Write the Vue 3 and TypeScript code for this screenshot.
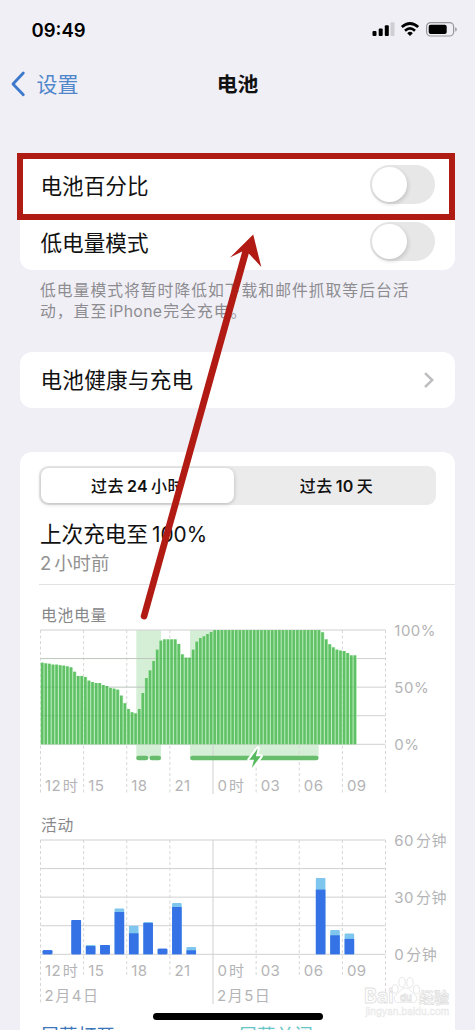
<script setup lang="ts">
interface Activity {
  hour: number
  on: number
  off: number
}

const left = 20.5
const hourWidth = 14.375
const chartTop = 10
const chartHeight = 114.3

const levels: number[] = [
  71.4, 70.8, 70.5, 69.7, 69.7, 69.1, 68.8, 68.2, 67.3, 63.5, 59.8, 59.8, 58.9, 55.7, 54.5, 53.6,
  53.6, 51.9, 51, 49.3, 48.7, 47.8, 42.6, 35.9, 30.9, 28, 27.1, 30.9, 44.9, 58, 64.7, 72.9,
  82.8, 90.7, 91.8, 91.8, 91.8, 91.8, 87.8, 78.7, 75.8, 75.8, 82.8, 89.8, 93, 94.5, 96.5, 98.3,
  ...Array<number>(30).fill(100),
  98, 91.8, 87.5, 84.8, 82.8, 82, 81.6, 79.9, 77.8, 77.8,
]

const activity: Activity[] = [
  { hour: 0, on: 4, off: 0 },
  { hour: 2, on: 34.3, off: 0 },
  { hour: 3, on: 8.2, off: 1 },
  { hour: 4, on: 9.2, off: 0 },
  { hour: 5, on: 42.3, off: 3.5 },
  { hour: 6, on: 21, off: 7.6 },
  { hour: 7, on: 31.3, off: 1 },
  { hour: 8, on: 5.5, off: 0 },
  { hour: 9, on: 47.3, off: 4 },
  { hour: 10, on: 4, off: 3.4 },
  { hour: 19, on: 64.7, off: 11.6 },
  { hour: 20, on: 19, off: 5.3 },
  { hour: 21, on: 15.4, off: 5.3 },
]

const verticals = Array.from({ length: 9 }, (_, i) => left + i * hourWidth * 3)
const horizontals = Array.from({ length: 5 }, (_, i) => chartTop + (i * chartHeight) / 4)
const hourLabels: string[] = ['12', '15', '18', '21', '0', '03', '06', '09']
const base = chartTop + chartHeight
</script>

<template>
  <div class="phone">
    <header class="status">
      <span class="clock">09:49</span>
      <svg class="status-icons" width="90" height="20" viewBox="0 0 90 20">
        <rect x="2.5" y="11" width="4" height="5" rx="1" />
        <rect x="8.7" y="8.5" width="4" height="7.5" rx="1" />
        <rect x="14.8" y="5.3" width="4" height="10.7" rx="1" />
        <rect x="20.5" y="2.3" width="4" height="13.7" rx="1" fill="#cfced3" />
        <g fill="none" stroke="#000" stroke-width="2.7">
          <path d="M31.8 7.1Q40 -.1 48.2 7.1" />
          <path d="M35 10.7Q40 6.2 45 10.7" />
        </g>
        <path d="M37.2 13.2Q40 10.5 42.8 13.2L40 16Z" />
        <rect x="56.6" y="2.6" width="27" height="13.4" rx="4" fill="none" stroke="#98979c" stroke-width="1.2" />
        <rect x="58.7" y="4.7" width="18" height="9.2" rx="2" />
        <path d="M85 7.2Q87 7.6 87 9.4T85 11.5Z" fill="#aaa9ae" />
      </svg>
    </header>

    <nav class="nav">
      <a class="back">
        <svg width="16" height="26" viewBox="0 0 16 26"><path d="M13.3 2 3 13l10.3 10.8" /></svg>
        <span>设置</span>
      </a>
      <h1>电池</h1>
    </nav>

    <main>
      <section class="card toggles">
        <div class="row"><span>电池百分比</span><i class="switch"></i></div>
        <div class="row"><span>低电量模式</span><i class="switch"></i></div>
        <div class="highlight"></div>
      </section>
      <p class="note">低电量模式将暂时降低如下载和邮件抓取等后台活<br />动，直至<span class="latin">iPhone</span>完全充电。</p>

      <section class="card health">
        <div class="row">
          <span>电池健康与充电</span>
          <svg width="12" height="18" viewBox="0 0 12 18"><path d="m2 2.2 7.2 6.9L2 16" /></svg>
        </div>
      </section>

      <section class="card usage">
        <div class="segments">
          <button class="active">过去<b>24</b>小时</button>
          <button>过去<b>10</b>天</button>
        </div>
        <h2>上次充电至<span>100%</span></h2>
        <p class="ago"><span>2</span>小时前</p>
        <hr />

        <h3>电池电量</h3>
        <svg class="chart" width="435" height="191" viewBox="0 0 435 191">
          <rect x="116.3" y="10" width="24.7" height="128" class="charging" />
          <rect x="170" y="10" width="128.6" height="128" class="charging" />
          <line v-for="y in horizontals" :key="y" :x1="left" x2="365.5" :y1="y" :y2="y" class="grid" />
          <line
            v-for="(x, i) in verticals" :key="x" :x1="x" :x2="x" :y1="chartTop" y2="174"
            :class="['grid', { dashed: i !== 4 }]"
          />
          <g v-for="(level, i) in levels" :key="i">
            <rect
              :x="left + i * hourWidth / 4" :y="base - level * chartHeight / 100"
              :width="hourWidth / 4" :height="level * chartHeight / 100" class="level-back"
            />
            <rect
              :x="left + 0.45 + i * hourWidth / 4" :y="base - level * chartHeight / 100"
              width="2.5" :height="level * chartHeight / 100" class="level"
            />
          </g>
          <line v-for="y in horizontals.slice(1, 4)" :key="'o' + y" :x1="left" x2="335" :y1="y" :y2="y" class="tint" />
          <g class="charge-line">
            <path d="M118.5 138H126" /><path d="M131.8 138H138.8" /><path d="M172.4 138H296.3" />
          </g>
          <path d="M237.8 128.3 229.3 139.8H234L231.8 147.9 240.8 136.3H235.9Z" class="bolt" />
          <text
            v-for="(label, i) in hourLabels" :key="label" :x="25 + i * hourWidth * 3" y="170.5"
          >{{ label }}<tspan v-if="i % 4 === 0" dx="1.5">时</tspan></text>
          <text x="374.3" y="15.8">100%</text>
          <text x="374.3" y="72.8">50%</text>
          <text x="374.3" y="129.8">0%</text>
        </svg>

        <h3 class="second">活动</h3>
        <svg class="chart" width="435" height="180" viewBox="0 0 435 180">
          <line v-for="y in horizontals" :key="y" :x1="left" x2="365.5" :y1="y" :y2="y" class="grid" />
          <line
            v-for="(x, i) in verticals" :key="x" :x1="x" :x2="x" :y1="chartTop" :y2="i % 4 === 0 ? 174 : 147"
            :class="['grid', { dashed: i !== 4 }]"
          />
          <g v-for="bar in activity" :key="bar.hour">
            <rect
              :x="left + 2.2 + bar.hour * hourWidth" :y="base - bar.on - bar.off" width="9.6"
              :height="bar.on + bar.off" rx="1" :fill="bar.off ? '#7fc6ee' : '#3472e6'"
            />
            <rect
              :x="left + 2.2 + bar.hour * hourWidth" :y="base - bar.on" width="9.6" :height="bar.on"
              :rx="bar.off ? 0 : 1" fill="#3472e6"
            />
          </g>
          <text
            v-for="(label, i) in hourLabels" :key="label" :x="25 + i * hourWidth * 3" y="145.5"
          >{{ label }}<tspan v-if="i % 4 === 0" dx="1.5">时</tspan></text>
          <text x="24.5" y="171">2<tspan dx="1">月</tspan><tspan dx="1">4</tspan><tspan dx="1">日</tspan></text>
          <text x="197" y="171">2<tspan dx="1">月</tspan><tspan dx="1">5</tspan><tspan dx="1">日</tspan></text>
          <text x="374.3" y="15.8">60<tspan dx="2">分钟</tspan></text>
          <text x="374.3" y="72.8">30<tspan dx="2">分钟</tspan></text>
          <text x="374.3" y="129.8">0<tspan dx="2">分钟</tspan></text>
        </svg>
        <div class="totals"><span>屏幕打开</span><span>屏幕关闭</span></div>
      </section>
    </main>

    <svg class="watermark" width="92" height="44" viewBox="0 0 92 44">
      <text x="3" y="28" class="brand">Bai</text>
      <g class="paw">
        <ellipse cx="34" cy="14" rx="3" ry="4.2" /><ellipse cx="41" cy="7.3" rx="3.2" ry="4.8" />
        <ellipse cx="49" cy="7.6" rx="3.2" ry="4.8" /><ellipse cx="55.5" cy="14.5" rx="3" ry="4.2" />
        <path d="M44.5 13c5 0 6 4.5 9.3 6.7 4 3 1.7 8.3-3 7.8q-6-1-12.5 0c-5 .5-7-4.8-3-7.8C38.8 17.5 40 13 44.5 13Z" />
      </g>
      <text x="39" y="26" class="du">du</text>
      <text x="58" y="28" class="cn">经验</text>
      <text x="4.5" y="40" class="site">jingyan.baidu.com</text>
    </svg>
    <div class="home"></div>
    <svg class="arrow" width="475" height="1030" viewBox="0 0 475 1030">
      <path d="M253.2 234.5 230 257.5 242.2 251.5 140.9 615.2A3.3 3.3 0 0 0 147.2 617.2L248.8 253.5 261.3 267Z" />
    </svg>
  </div>
</template>

<style>
body {
  margin: 0;
  background: #f0eff5;
}
</style>

<style scoped>
.phone {
  position: relative;
  width: 475px;
  height: 1030px;
  overflow: hidden;
  background: #f0eff5;
  color: #111;
  font-family: Inter, "Noto Sans CJK SC", sans-serif;
}
.status {
  display: flex;
  justify-content: space-between;
  box-sizing: border-box;
  height: 60px;
  padding: 20px 15px 0 31.5px;
}
.clock {
  font-size: 18.5px;
  font-weight: 600;
  line-height: 20px;
  color: #000;
}
.nav {
  display: grid;
  grid-template-columns: 1fr auto 1fr;
  align-items: center;
  height: 48px;
}
.back {
  display: flex;
  align-items: center;
  gap: 10.5px;
  padding-left: 10px;
  color: #5086ca;
  font-size: 21px;
  line-height: 30px;
}
.back span,
h1,
.row span {
  padding-top: 2px;
}
.back path {
  fill: none;
  stroke: #3c78cb;
  stroke-width: 2.8;
  stroke-linecap: round;
  stroke-linejoin: round;
}
h1 {
  margin: 0;
  font-size: 20.8px;
  line-height: 30px;
  font-weight: 700;
}
main {
  padding: 49px 20px 0;
}
.card {
  background: #fff;
  border-radius: 12px;
}
.toggles {
  position: relative;
}
.row {
  display: flex;
  align-items: center;
  justify-content: space-between;
  height: 56.5px;
  padding: 0 20px 0 20.5px;
  font-size: 21.6px;
  line-height: 30px;
}
.switch {
  box-sizing: border-box;
  width: 65px;
  height: 39px;
  margin-top: -1px;
  padding: 2px;
  border-radius: 20px;
  background: #e7e7e8;
}
.switch::after {
  content: "";
  display: block;
  width: 35px;
  height: 35px;
  border-radius: 50%;
  background: #fff;
  box-shadow: 1px 2px 4px rgba(0, 0, 0, 0.16);
}
.highlight {
  position: absolute;
  left: -3px;
  top: -4.5px;
  box-sizing: border-box;
  width: 437.5px;
  height: 67.5px;
  border: 6.5px solid #ae1c14;
}
.note {
  box-sizing: border-box;
  height: 82px;
  margin: 0;
  padding: 11px 0 0 20px;
  font-size: 15.8px;
  letter-spacing: 1px;
  line-height: 20.5px;
  white-space: nowrap;
  color: #8d8c91;
}
.latin {
  margin: 0 1px 0 2px;
  letter-spacing: 0.3px;
}
.health {
  margin-bottom: 44px;
}
.health .row {
  height: 56px;
}
.health span {
  padding-top: 0;
  letter-spacing: 0.25px;
}
.health path {
  fill: none;
  stroke: #bebec1;
  stroke-width: 2.5;
}
.usage {
  box-sizing: border-box;
  height: 600px;
  padding-top: 14px;
}
.segments {
  display: flex;
  box-sizing: border-box;
  width: 397px;
  height: 39px;
  padding: 2px;
  margin: 0 19px;
  border-radius: 9px;
  background: #ebebec;
}
button {
  flex: 1;
  padding: 1px 0 0;
  border: 0;
  border-radius: 8px;
  background: none;
  color: #111;
  font: 500 16px/34px Inter, "Noto Sans CJK SC", sans-serif;
  letter-spacing: 0.4px;
}
button:last-child {
  padding-left: 5px;
}
button b {
  margin: 0 3px;
  font-weight: 600;
}
button.active {
  flex: 0 0 193px;
  background: #fff;
  box-shadow: 0 1px 4px rgba(0, 0, 0, 0.22);
}
h2 {
  margin: 14px 0 0 20px;
  font-size: 21.6px;
  line-height: 30px;
  font-weight: 400;
}
h2 span {
  margin-left: 4px;
  font-size: 20.8px;
}
.ago {
  margin: 0 0 0 20px;
  font-size: 18.4px;
  line-height: 26px;
  color: #929292;
}
.ago span {
  margin-right: 3px;
}
hr {
  height: 1px;
  margin: 8px 0 0 19px;
  border: 0;
  background: #e2e2e3;
}
h3 {
  margin: 21px 0 0 21px;
  font-size: 15.8px;
  line-height: 20px;
  letter-spacing: 0.7px;
  font-weight: 400;
  color: #88888a;
}
.second {
  margin-top: 5px;
}
.chart {
  display: block;
  margin-top: -6px;
}
.chart text {
  font-size: 15px;
  letter-spacing: 0.5px;
  fill: #b4b4b6;
}
.grid {
  stroke: #d0d0d1;
  stroke-width: 1;
}
.dashed {
  stroke: #d6d6d7;
  stroke-dasharray: 3 2.5;
}
.charging {
  fill: #d5efd6;
}
.level-back {
  fill: #b2e9b4;
}
.level {
  fill: #60c166;
}
.tint {
  stroke: rgba(50, 130, 60, 0.12);
}
.charge-line {
  stroke: #68bd6c;
  stroke-width: 4.6;
  stroke-linecap: round;
}
.bolt {
  fill: #58ba5e;
  stroke: #fff;
  stroke-width: 4;
  stroke-linejoin: round;
  paint-order: stroke;
}
.totals {
  display: grid;
  grid-template-columns: 198px 1fr;
  padding-left: 20.5px;
  margin-top: 11px;
  font-size: 18.6px;
  line-height: 28px;
  color: #3b76b8;
}
.totals span + span {
  color: #69c4c5;
}
.watermark {
  position: absolute;
  left: 361px;
  top: 975px;
  opacity: 0.75;
}
.watermark text,
.paw {
  fill: #fff;
  stroke: #d6d6d6;
  stroke-width: 0.8;
}
.watermark .brand {
  font-size: 19.5px;
  font-weight: 700;
}
.watermark .du {
  font-size: 9.5px;
  font-weight: 600;
}
.watermark .cn {
  font-size: 15px;
  font-weight: 700;
}
.watermark .site {
  font-size: 9.7px;
  stroke-width: 0.5;
  stroke: #dedede;
}
.home {
  position: absolute;
  left: 153px;
  top: 1013px;
  width: 170px;
  height: 7px;
  border-radius: 4px;
  background: #000;
}
.arrow {
  position: absolute;
  left: 0;
  top: 0;
  fill: #b11b14;
}
</style>
